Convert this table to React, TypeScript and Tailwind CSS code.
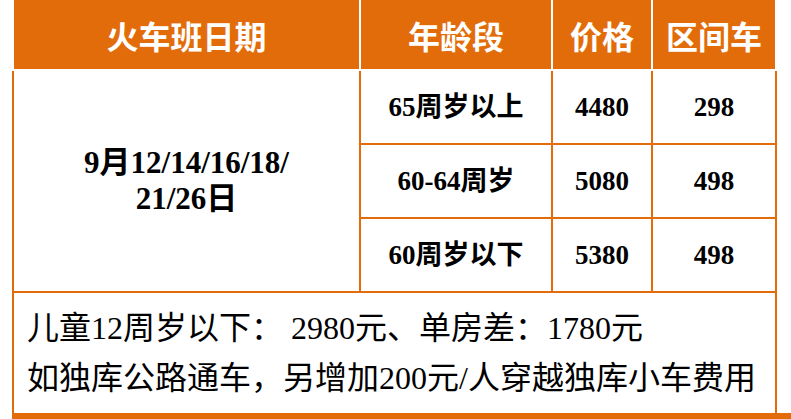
const ORANGE_ROWS = [
  { age: "65周岁以上", price: "4480", local: "298" },
  { age: "60-64周岁", price: "5080", local: "498" },
  { age: "60周岁以下", price: "5380", local: "498" },
];

const headFont = { fontFamily: '"Noto Sans CJK SC", "Noto Sans", sans-serif' };
const bodyFont = { fontFamily: '"Liberation Serif", "Noto Sans CJK SC", serif' };

export default function App() {
  return (
    <div className="w-[791px] h-[419px] bg-white overflow-hidden" style={bodyFont}>
      <div className="pl-[12px]">
        {/* header */}
        <div
          className="ml-[2px] w-[761px] h-[69px] grid grid-cols-[345px_190px_98px_122px] gap-x-[2px] text-white font-bold text-[32px]"
          style={headFont}
        >
          <div className="bg-[#e36c0a] flex items-center justify-center">火车班日期</div>
          <div className="bg-[#e36c0a] flex items-center justify-center">年龄段</div>
          <div className="bg-[#e36c0a] flex items-center justify-center">价格</div>
          <div className="bg-[#e36c0a] flex items-center justify-center">区间车</div>
        </div>

        {/* body */}
        <div className="mt-[2px] w-[765px] border-x-2 border-[#e36c0a] bg-[#e36c0a] grid grid-cols-[345px_190px_98px_122px] grid-rows-[72px_72px_72px_120px] gap-[2px]">
          <div className="row-span-3 bg-white flex items-center justify-center text-center font-bold text-[31px] leading-[36px] text-black">
            <div>
              9月12/14/16/18/
              <br />
              21/26日
            </div>
          </div>
          {ORANGE_ROWS.map((r, i) => (
            <div key={i} className="contents">
              <div className="bg-white flex items-center justify-center font-bold text-[27px] text-black">{r.age}</div>
              <div className="bg-white flex items-center justify-center font-bold text-[27px] text-black">{r.price}</div>
              <div className="bg-white flex items-center justify-center font-bold text-[27px] text-black">{r.local}</div>
            </div>
          ))}
          <div className="col-span-4 bg-white pl-[13px] pt-[10px] text-[32px] leading-[50px] text-black whitespace-nowrap">
            <div>儿童12周岁以下： 2980元、单房差：1780元</div>
            <div>如独库公路通车，另增加200元/人穿越独库小车费用</div>
          </div>
        </div>
        {/* bottom bar runs past the table to the page edge */}
        <div className="h-[8px] bg-[#e36c0a]" />
      </div>
    </div>
  );
}
